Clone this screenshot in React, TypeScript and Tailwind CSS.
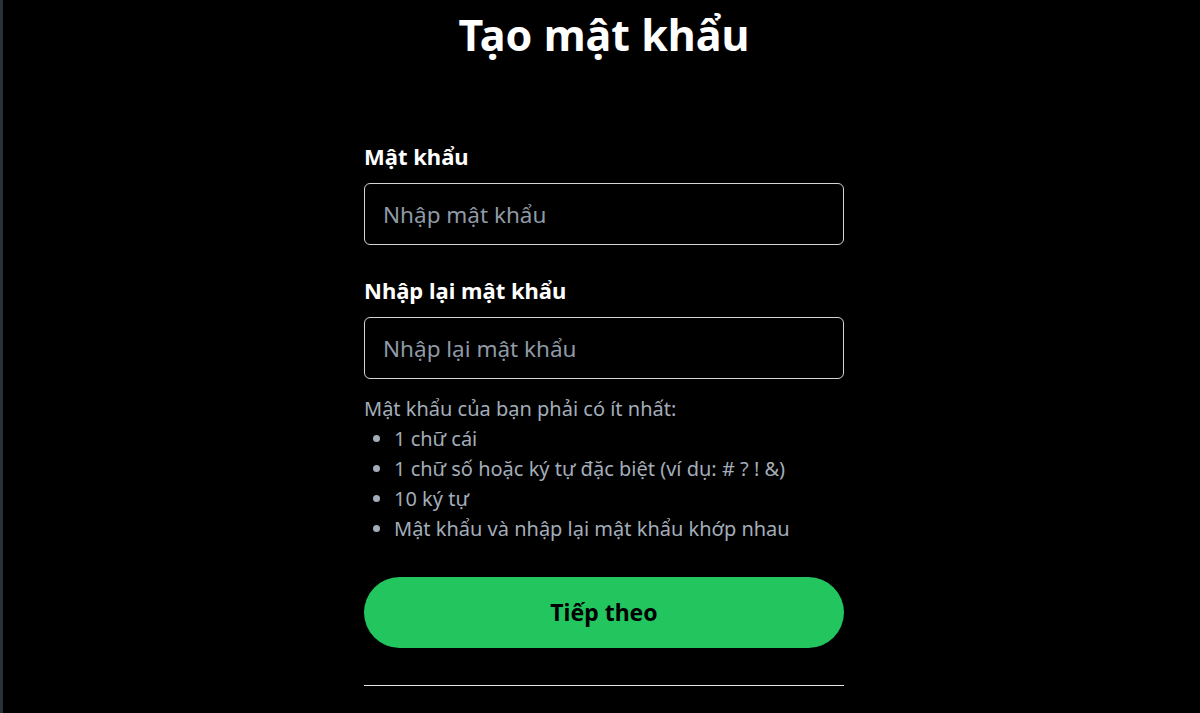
import { useState } from "react";

const rules = [
  "1 chữ cái",
  "1 chữ số hoặc ký tự đặc biệt (ví dụ: # ? ! &)",
  "10 ký tự",
  "Mật khẩu và nhập lại mật khẩu khớp nhau",
];

const Field = ({
  label,
  placeholder,
  value,
  onChange,
}: {
  label: string;
  placeholder: string;
  value: string;
  onChange: (v: string) => void;
}) => (
  <div className="flex flex-col">
    <label className="text-[22px] font-bold text-white leading-[28px] mb-[13px]">
      {label}
    </label>
    <input
      type="password"
      value={value}
      onChange={(e) => onChange(e.target.value)}
      placeholder={placeholder}
      className="h-[62px] w-full rounded-[6px] border border-[#d4d4d4] bg-black px-[18px] text-[22.5px] text-white placeholder:text-[#8f9aa6] outline-none"
    />
  </div>
);

export default function App() {
  const [pw, setPw] = useState("");
  const [pw2, setPw2] = useState("");

  return (
    <div
      className="flex h-[713px] w-full overflow-hidden bg-black"
      style={{ fontFamily: '"Noto Sans", "Open Sans", sans-serif' }}
    >
      <div className="w-[3px] shrink-0 bg-[#2b313b]" />
      <div className="flex flex-1 flex-col items-center pl-[5px]">
        <h1 className="mt-[7px] text-[43px] font-bold leading-[56px] text-white">
          Tạo mật khẩu
        </h1>
        <div className="mt-[79px] flex w-[480px] flex-col">
          <Field
            label="Mật khẩu"
            placeholder="Nhập mật khẩu"
            value={pw}
            onChange={setPw}
          />
          <div className="mt-[31px]">
            <Field
              label="Nhập lại mật khẩu"
              placeholder="Nhập lại mật khẩu"
              value={pw2}
              onChange={setPw2}
            />
          </div>
          <div className="mt-[15px] text-[20px] leading-[30px] text-[#a3adb9]">
            <p>Mật khẩu của bạn phải có ít nhất:</p>
            <ul className="list-disc pl-[30px] marker:text-[#a3adb9]">
              {rules.map((r) => (
                <li key={r}>{r}</li>
              ))}
            </ul>
          </div>
          <button className="mt-[33px] h-[71px] w-full rounded-full bg-[#22c55e] text-[23px] font-bold text-black">
            Tiếp theo
          </button>
          <div className="mt-[37px] h-px w-full bg-[#e5e5e5]" />
        </div>
      </div>
    </div>
  );
}
